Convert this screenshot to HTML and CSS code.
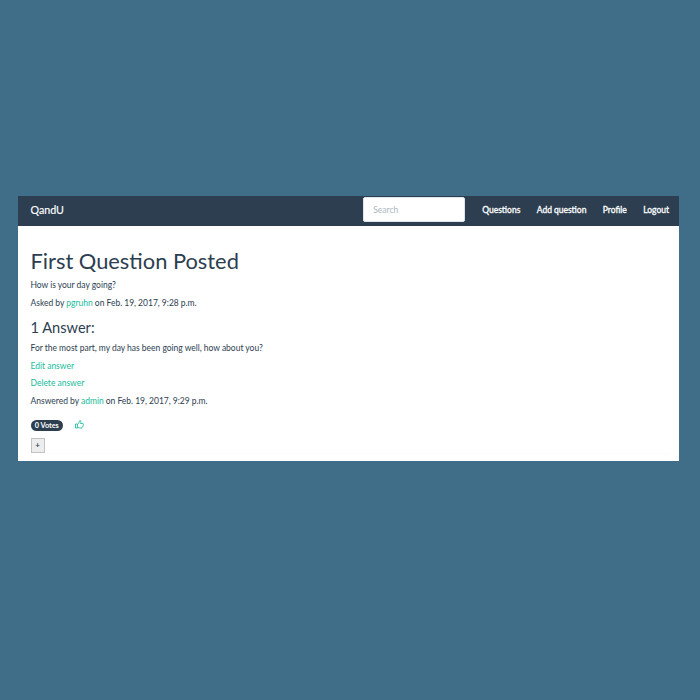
FILE: index.html
```html
<!DOCTYPE html>
<html lang="en">
<head>
<meta charset="utf-8">
<title>QandU</title>
<link rel="stylesheet" href="styles.css">
</head>
<body>
<div class="window">
  <nav class="navbar">
    <a class="brand">QandU</a>
    <input class="search" type="text" placeholder="Search">
    <a class="link">Questions</a>
    <a class="link">Add question</a>
    <a class="link">Profile</a>
    <a class="link">Logout</a>
  </nav>
  <main class="content">
    <h1>First Question Posted</h1>
    <p>How is your day going?</p>
    <p>Asked by <a>pgruhn</a> on Feb. 19, 2017, 9:28 p.m.</p>
    <h3>1 Answer:</h3>
    <p>For the most part, my day has been going well, how about you?</p>
    <p><a>Edit answer</a></p>
    <p><a>Delete answer</a></p>
    <p>Answered by <a>admin</a> on Feb. 19, 2017, 9:29 p.m.</p>
    <div class="votes">
      <span class="badge">0 Votes</span>
      <svg class="thumb" viewBox="0 0 18 18" fill="none" stroke="currentColor" stroke-width="1.7" stroke-linejoin="round"><path d="M1 8h4v8H1zM5 8.500c2-1 3-3 3.500-4.500.300-1.500.500-3 1.500-3 2.500 0 2 3.500 1 6h4.500c2 0 2 2.500.500 2.700 1 1 .500 2.300-.700 2.500.700 1 .200 2-1 2.200.300 1.200-.500 1.900-1.800 1.900-3 0-4.500-1.300-7.500-1.300"/></svg>
    </div>
    <button class="plus">+</button>
    <div class="rule"></div>
  </main>
</div>
</body>
</html>
```
FILE: styles.css
```css
* { box-sizing: border-box; }
body {
  margin: 0;
  height: 700px;
  padding: 196px 21px 0 18px;
  background: #406d87;
  color: #2c3e50;
  font: 8.5px/12px Lato, sans-serif;
}
.window { height: 265px; background: #fff; }
.navbar {
  display: flex;
  align-items: center;
  height: 30px;
  padding: 0 10px 2px 12.5px;
  background: #2c3e50;
  color: #fff;
}
.brand { font-size: 10.7px; -webkit-text-stroke: 0.15px; }
.search {
  width: 102px;
  height: 25px;
  margin: -1px 17px 0 auto;
  padding: 0 9px;
  border: 1px solid #dce4ec;
  border-radius: 2px;
  background: #fff;
  font: 8.5px Lato, sans-serif;
}
.search::placeholder { color: #acb6c0; }
.link { margin-right: 16.4px; font-size: 8.5px; word-spacing: -0.2px; -webkit-text-stroke: 0.3px; }
.link:last-child { margin-right: 0; }
.content { padding: 23px 12.5px 0; }
h1 { margin: 0 0 6px; font-size: 21.85px; line-height: 24px; font-weight: 400; }
h3 { margin: 10.5px 0 6px; font-size: 14.6px; line-height: 17px; font-weight: 400; }
p { margin: 0 0 5.6px; word-spacing: -0.1px; }
.content a { color: #18bc9c; }
.votes { display: flex; align-items: center; height: 11px; margin-top: 12.8px; }
.badge {
  width: 32.5px;
  height: 11px;
  border-radius: 6px;
  background: #2c3e50;
  color: #fff;
  font-size: 7.3px;
  font-weight: 700;
  line-height: 11px;
  text-align: center;
}
.thumb { width: 9px; height: 9px; margin-left: 11.5px; margin-bottom: 1px; color: #18bc9c; }
.plus {
  display: block;
  width: 14px;
  height: 15px;
  margin-top: 7px;
  padding: 0;
  border: 1px solid #c3c3c3;
  background: #ededed;
  color: #2c3e50;
  font: 700 8px/12px Lato, sans-serif;
}
.rule { height: 1px; margin-left: 15px; background: #fafafa; }
```
